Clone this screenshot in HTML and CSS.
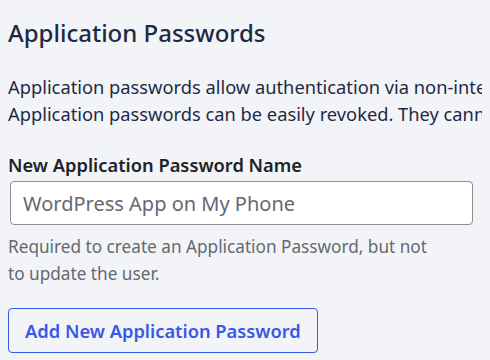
FILE: index.html
```html
<!DOCTYPE html>
<html lang="en">
<head>
  <meta charset="UTF-8">
  <meta name="viewport" content="width=device-width, initial-scale=1.0">
  <title>Application Passwords</title>
  <link rel="stylesheet" href="styles.css">
</head>
<body>
  <section class="app-passwords">
    <h2>Application Passwords</h2>
    <p class="intro">Application passwords allow authentication via non-interactive systems, such as XML-RPC or the REST API, without providing your actual password.<br>Application passwords can be easily revoked. They cannot be used for traditional logins to your website.</p>

    <div class="field">
      <label for="app-name">New Application Password Name</label>
      <input type="text" id="app-name" placeholder="WordPress App on My Phone">
      <p class="description">Required to create an Application Password, but not to update the user.</p>
    </div>

    <button class="add-btn">Add New Application Password</button>
  </section>
</body>
</html>
```

FILE: styles.css
```css
body {
  font-family: "Noto Sans", sans-serif;
  background-color: #f3f4f8;
  margin: 0;
  padding: 0;
  color: #1e2a44;
  overflow: hidden;
}
.app-passwords {
  padding: 18px 8px 0 8px;
}
.app-passwords h2 {
  margin: 0;
  font-size: 24px;
  font-weight: 500;
  line-height: 30px;
  color: #1e2a44;
}
.intro {
  margin: 25px 0 0 0;
  font-size: 18.3px;
  line-height: 27px;
  white-space: nowrap;
  overflow: hidden;
}
.field {
  margin-top: 25px;
}
.field label {
  display: block;
  font-size: 18.3px;
  font-weight: 600;
  line-height: 26px;
  color: #1d2327;
}
.field input {
  display: block;
  box-sizing: border-box;
  width: 463px;
  height: 44px;
  margin: 3px 0 0 2px;
  padding: 0 12px;
  border: 1px solid #8c8f94;
  border-radius: 4px;
  background: #fff;
  font-family: inherit;
  font-size: 20px;
  color: #2c3338;
}
.field input::placeholder {
  color: #646970;
}
.description {
  margin: 8px 0 0 0;
  max-width: 430px;
  font-size: 17.2px;
  line-height: 27px;
  color: #646970;
}
.add-btn {
  margin-top: 21px;
  box-sizing: border-box;
  height: 45px;
  padding: 0 16px;
  border: 1px solid #3858e9;
  border-radius: 4px;
  background: #f3f4f8;
  font-family: inherit;
  font-size: 18.3px;
  font-weight: 600;
  color: #3858e9;
  cursor: pointer;
}
```
